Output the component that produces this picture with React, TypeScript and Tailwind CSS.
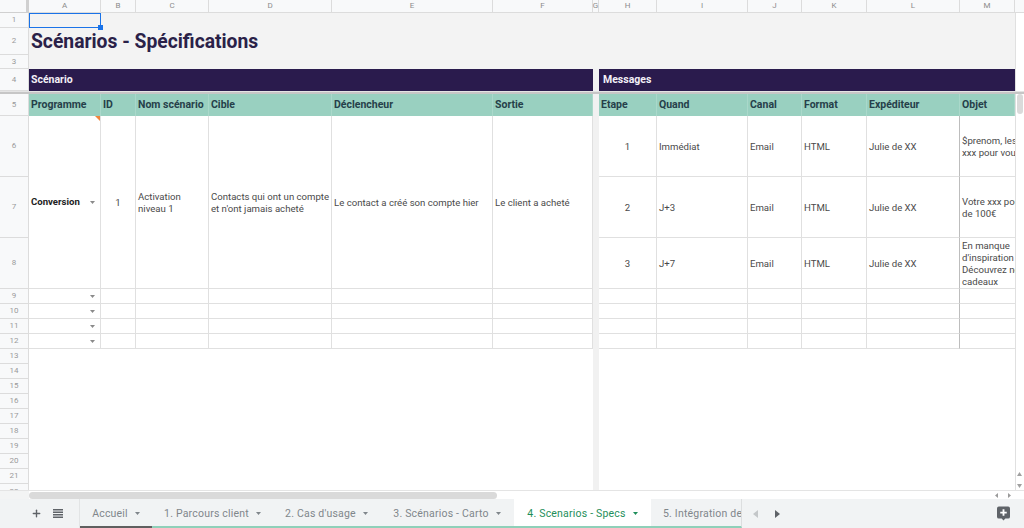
import { Plus } from 'lucide-react';
import type { ReactNode } from 'react';

const letters = ['A', 'B', 'C', 'D', 'E', 'F', 'G', 'H', 'I', 'J', 'K', 'L', 'M'];

const headersLeft = ['Programme', 'ID', 'Nom scénario', 'Cible', 'Déclencheur', 'Sortie'];
const headersRight = ['Etape', 'Quand', 'Canal', 'Format', 'Expéditeur', 'Objet'];

const messages = [
  { row: 6, step: '1', when: 'Immédiat', subject: ['$prenom, les', 'xxx pour vous'] },
  { row: 7, step: '2', when: 'J+3', subject: ['Votre xxx pour', 'de 100€'] },
  { row: 8, step: '3', when: 'J+7', subject: ['En manque', "d'inspiration", 'Découvrez nos', 'cadeaux'] },
];

const tabs = [
  { label: 'Accueil', w: 'w-[72px]', strip: 'border-[#5f5f5f]' },
  { label: '1. Parcours client', w: 'w-[121px]', strip: 'border-[#8fd0b9]' },
  { label: "2. Cas d'usage", w: 'w-[107px]', strip: 'border-[#8fd0b9]' },
  { label: '3. Scénarios - Carto', w: 'w-[134px]', strip: 'border-[#8fd0b9]' },
];

const Caret = ({ className = 'text-[#8a8a8a]' }: { className?: string }) => (
  <svg width="5" height="3" viewBox="0 0 5 3" className={`shrink-0 ${className}`}>
    <path d="M0 0h5L2.500 3z" fill="currentColor" />
  </svg>
);

const RowHead = ({ n }: { n: number }) => (
  <div className="flex items-center justify-center overflow-hidden bg-[#f8f9fa] border-r border-b border-[#dcdcdc] text-[8px] text-[#9a9a9a]">
    {n}
  </div>
);

const Cell = ({ className = '', children }: { className?: string; children?: ReactNode }) => (
  <div className={`flex items-center overflow-hidden bg-white border-r border-b border-[#e0e0e0] px-[2px] pt-[1px] text-[9.6px] leading-[12px] text-[#4a4a4a] ${className}`}>
    {children}
  </div>
);

const Spine = ({ className = '' }: { className?: string }) => <div className={`bg-[#f1f1f1] ${className}`} />;

const Gutter = () => <div className="bg-white border-l border-[#e0e0e0]" />;

const EmptyRow = ({ n }: { n: number }) => (
  <>
    <RowHead n={n} />
    <Cell className="justify-end pr-[5px]"><Caret /></Cell>
    <Cell />
    <Cell />
    <Cell />
    <Cell />
    <Cell />
    <Spine />
    <Cell />
    <Cell />
    <Cell />
    <Cell />
    <Cell className="border-r-[#bdbdbd]" />
    <Cell className="border-r-0" />
    <Gutter />
  </>
);

export default function App() {
  return (
    <div className="flex flex-col w-[1024px] h-[528px] overflow-hidden bg-white font-['Roboto',sans-serif]">
      {/* Sheet */}
      <div className="relative h-[490px] overflow-hidden">
        <div className="grid grid-cols-[29px_72px_35px_73px_123px_161px_100px_6px_58px_91px_54px_65px_93px_55px_9px] grid-rows-[13px_15px_27px_14px_22px_3px_22px_61px_61px_51px_15px_15px_15px_15px_15px_15px_15px_15px_15px_15px_15px_15px_15px_6px]">
          {/* column letters */}
          <div className="bg-[#f8f9fa] border-r-[3px] border-b border-[#d0d0d0]" />
          {letters.map((c) => (
            <div key={c} className="flex items-center justify-center bg-[#f8f9fa] border-r border-b border-[#dcdcdc] text-[8px] leading-none text-[#8c8c8c]">
              {c}
            </div>
          ))}
          <div className="bg-[#f8f9fa] border-b border-[#dcdcdc]" />

          {/* rows 1 to 3 */}
          <RowHead n={1} />
          <div className="relative bg-[#f3f3f3] border border-[#1a73e8]">
            <span className="absolute -right-[3px] -bottom-[3px] w-[5px] h-[5px] bg-[#1a73e8]" />
          </div>
          <div className="col-span-12 bg-[#f3f3f3]" />
          <Gutter />

          <RowHead n={2} />
          <div className="col-span-13 flex items-center bg-[#f3f3f3] px-[2px] pt-[2px] text-[19.3px] font-bold text-[#2a2148] whitespace-nowrap">
            Scénarios - Spécifications
          </div>
          <Gutter />

          <RowHead n={3} />
          <div className="col-span-13 bg-[#f3f3f3]" />
          <Gutter />

          {/* row 4 */}
          <RowHead n={4} />
          <div className="col-span-6 flex items-center bg-[#2a1b4d] px-[2px] text-[10.5px] font-bold text-[#f3f0f7]">Scénario</div>
          <Spine />
          <div className="col-span-6 flex items-center bg-[#2a1b4d] px-[4px] text-[10.5px] font-bold text-[#f3f0f7]">Messages</div>
          <Gutter />

          {/* frozen rows line */}
          <div className="col-span-full bg-[#c6c6c6] border-t border-[#e4e4e4]" />

          {/* row 5 */}
          <RowHead n={5} />
          {headersLeft.map((h) => (
            <div key={h} className="flex items-center bg-[#99d0c0] border-r border-[#aad8ca] px-[2px] text-[10.5px] font-bold text-[#26404a] whitespace-nowrap">{h}</div>
          ))}
          <Spine />
          {headersRight.map((h) => (
            <div key={h} className="flex items-center bg-[#99d0c0] border-r border-[#aad8ca] px-[2px] text-[10.5px] font-bold text-[#26404a] whitespace-nowrap">{h}</div>
          ))}
          <Gutter />

          {/* rows 6 to 8 */}
          {messages.map((m, i) => (
            <div key={m.row} className="contents">
              <RowHead n={m.row} />
              {i === 0 && (
                <>
                  <div className="relative row-span-3 flex items-center justify-between bg-white border-r border-b border-[#e0e0e0] pl-[2px] pr-[5px] text-[9.6px] font-bold text-[#222]">
                    Conversion
                    <Caret />
                    <span className="absolute top-0 right-0 w-0 h-0 border-t-[5px] border-l-[5px] border-t-[#f2853c] border-l-transparent" />
                  </div>
                  <Cell className="row-span-3 justify-center">1</Cell>
                  <Cell className="row-span-3">Activation<br />niveau 1</Cell>
                  <Cell className="row-span-3 whitespace-nowrap">Contacts qui ont un compte<br />et n'ont jamais acheté</Cell>
                  <Cell className="row-span-3 whitespace-nowrap">Le contact a créé son compte hier</Cell>
                  <Cell className="row-span-3 whitespace-nowrap">Le client a acheté</Cell>
                </>
              )}
              <Spine />
              <Cell className="justify-center">{m.step}</Cell>
              <Cell>{m.when}</Cell>
              <Cell>Email</Cell>
              <Cell>HTML</Cell>
              <Cell className="border-r-[#bdbdbd]">Julie de XX</Cell>
              <Cell className="border-r-0 whitespace-nowrap">
                <span>
                  {m.subject.map((s) => (
                    <span key={s} className="block">{s}</span>
                  ))}
                </span>
              </Cell>
              <Gutter />
            </div>
          ))}

          {[9, 10, 11, 12].map((n) => <EmptyRow key={n} n={n} />)}

          {/* empty area */}
          <RowHead n={13} />
          <div className="col-span-6 row-span-10 bg-white" />
          <Spine className="row-span-10" />
          <div className="col-span-6 row-span-10 bg-white" />
          <div className="row-span-10 bg-white border-l border-[#e0e0e0]" />
          {[14, 15, 16, 17, 18, 19, 20, 21].map((n) => <RowHead key={n} n={n} />)}
          <div className="flex justify-center overflow-hidden bg-[#f8f9fa] border-r border-[#dcdcdc] text-[8px] leading-none text-[#9a9a9a] pt-[4px]">22</div>
        </div>

        {/* vertical scrollbar */}
        <span className="absolute top-[94px] right-[1px] w-[6px] h-[20px] rounded-[3px] bg-[#dadada]" />
        <svg width="7" height="4" viewBox="0 0 7 4" className="absolute top-[472px] right-[1px] text-[#a0a0a0]">
          <path d="M3.500 0L6 4H1z" fill="currentColor" />
        </svg>
        <svg width="7" height="4" viewBox="0 0 7 4" className="absolute top-[484px] right-[1px] text-[#a0a0a0]">
          <path d="M1 0h5L3.500 4z" fill="currentColor" />
        </svg>
      </div>

      {/* horizontal scrollbar */}
      <div className="flex items-center h-[9px] shrink-0 bg-white border-t border-[#e4e4e4]">
        <div className="w-[29px] h-full shrink-0 bg-[#f3f4f4]" />
        <div className="w-[468px] h-[7px] rounded-[4px] bg-[#dadada]" />
        <div className="flex items-center gap-[10px] ml-[498px] text-[#9a9a9a]">
          <svg width="3" height="5" viewBox="0 0 3 5"><path d="M3 0v5L0 2.500z" fill="currentColor" /></svg>
          <svg width="3" height="5" viewBox="0 0 3 5"><path d="M0 0v5l3-2.500z" fill="currentColor" /></svg>
        </div>
      </div>

      {/* sheet tabs */}
      <div className="flex items-stretch flex-1 bg-[#f1f3f4] text-[10.5px] font-normal text-[#80868b] tracking-[0.2px]">
        <div className="flex items-center w-[80px] shrink-0 border-r border-[#e2e4e5] pl-[31px]">
          <Plus size={11} strokeWidth={3} className="text-[#5f6368]" />
          <svg width="10" height="9" viewBox="0 0 10 9" className="ml-[11px] text-[#5f6368]">
            <path d="M0 0h10v1.500H0zM0 2.500h10V4H0zM0 5h10v1.500H0zM0 7.500h10V9H0z" fill="currentColor" />
          </svg>
        </div>
        {tabs.map((t) => (
          <div key={t.label} className={`flex items-center justify-center gap-[7px] shrink-0 pt-[2px] border-b-2 ${t.w} ${t.strip} whitespace-nowrap`}>
            {t.label}
            <Caret className="text-[#80868b]" />
          </div>
        ))}
        <div className="flex items-center justify-center gap-[7px] w-[137px] shrink-0 pt-[2px] bg-white border-b-2 border-[#8fd0b9] text-[#1e8e5a] whitespace-nowrap">
          4. Scenarios - Specs
          <Caret className="text-[#1e8e5a]" />
        </div>
        <div className="flex items-center w-[91px] shrink-0 overflow-hidden pt-[2px] border-b-2 border-[#8fd0b9] border-r border-r-[#dcdedf] pl-[12px] whitespace-nowrap">
          5. Intégration des
        </div>
        <div className="flex items-center flex-1 pl-[11px] pr-[14px]">
          <svg width="5" height="8" viewBox="0 0 5 8" className="text-[#c4c7c9]"><path d="M5 0v8L0 4z" fill="currentColor" /></svg>
          <svg width="5" height="8" viewBox="0 0 5 8" className="ml-[17px] text-[#5f6368]"><path d="M0 0v8l5-4z" fill="currentColor" /></svg>
          <svg width="13" height="15" viewBox="0 0 14 15" className="ml-auto text-[#5f6368]">
            <path d="M2 0h10a2 2 0 0 1 2 2v9a2 2 0 0 1-2 2H9l-2 2-2-2H2a2 2 0 0 1-2-2V2a2 2 0 0 1 2-2z" fill="currentColor" />
            <path d="M6 3h2v2.500h2.500v2H8V10H6V7.500H3.500v-2H6z" fill="#fff" />
          </svg>
        </div>
      </div>
    </div>
  );
}
